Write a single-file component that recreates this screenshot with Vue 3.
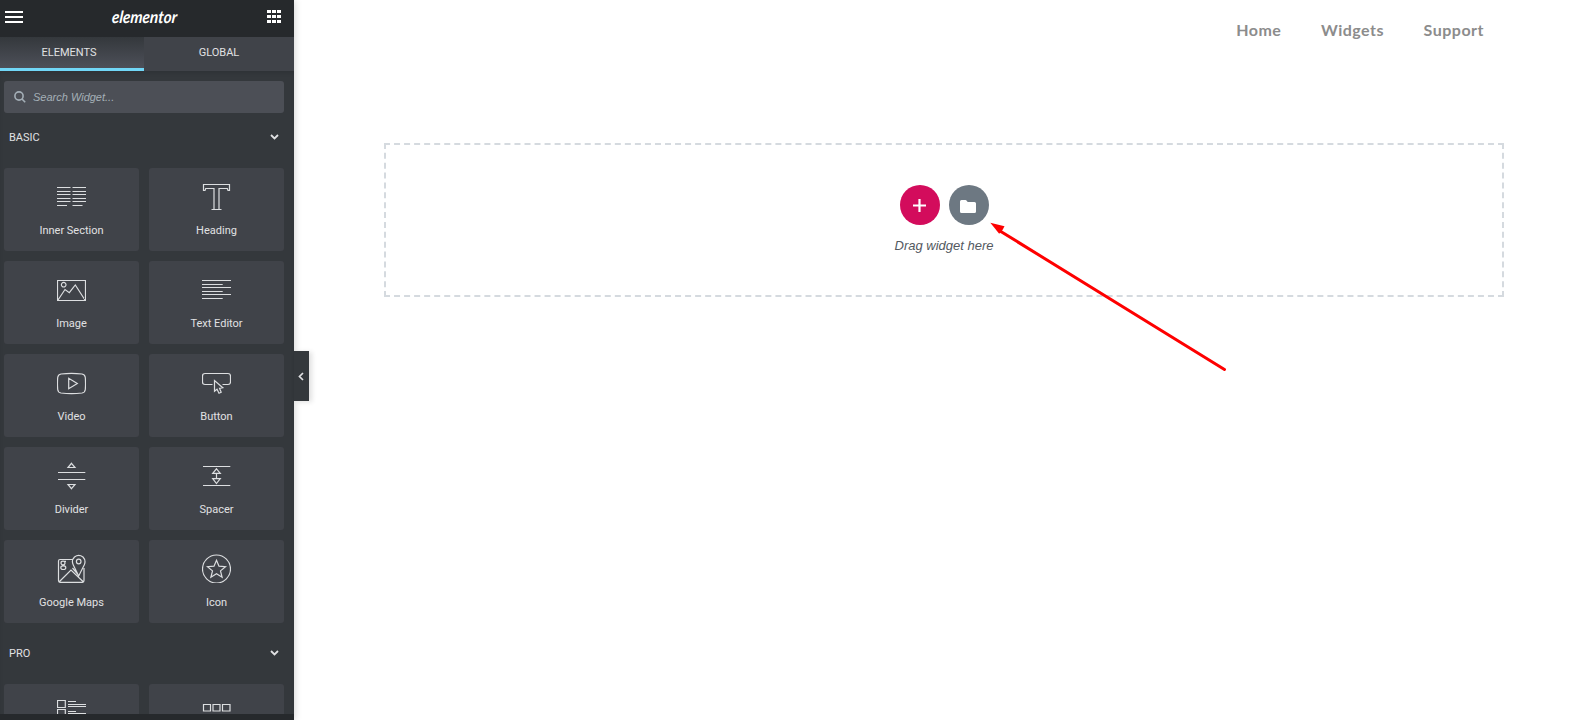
<script setup>
import { ref } from 'vue'

const tabs = ['Elements', 'Global']
const activeTab = ref('Elements')
const search = ref('')
const links = ['Home', 'Widgets', 'Support']

const categories = [
    {
        title: 'Basic',
        widgets: [
            {
                name: 'Inner Section',
                icon: 'M0 5.5H13.5M15.5 5.5H29M0 9.5H13.5M15.5 9.5H29M0 12.5H13.5M15.5 12.5H29M0 16.5H13.5M15.5 16.5H29M0 19.5H13.5M15.5 19.5H29M0 23.5H10M15.5 23.5H25.5',
            },
            {
                name: 'Heading',
                icon: 'M1.5 2.5H27.5V8.5H26L25.3 6.5H17V27.5H12V6.5H3.7L3 8.5H1.5ZM9.5 27.5H19.5',
            },
            {
                name: 'Image',
                icon: 'M.5 5.5H28.5V25.5H.5ZM9 9.7A2.3 2.3 0 1 1 4.4 9.7A2.3 2.3 0 1 1 9 9.7M1 25L8 14.5L12.3 17.7L18.3 10L28 25',
            },
            {
                name: 'Text Editor',
                icon: 'M0 5.5H29M0 9.5H20.7M0 12.5H29M0 16.5H20.7M0 19.5H29M0 23.5H20.7',
            },
            {
                name: 'Video',
                icon: 'M4 6Q14.5 4.8 25 6Q28 6.5 28.3 9.5Q28.8 15.5 28.3 21.5Q28 24.5 25 25Q14.5 26.2 4 25Q1 24.5 .7 21.5Q.2 15.5 .7 9.5Q1 6.5 4 6ZM11.7 10.3V20.8L20.3 15.5Z',
            },
            {
                name: 'Button',
                icon: 'M10.5 16.5H3Q.5 16.5 .5 14V8Q.5 5.5 3 5.5H26Q28.5 5.5 28.5 8V14Q28.5 16.5 26 16.5H20.5M12.5 12.5V23.3L15 21.3L17 25.3L19.2 24.2L17.5 20.3L20.8 19.7Z',
            },
            {
                name: 'Divider',
                icon: 'M1 11.5H28.3M1 18.5H28.3M14.5 2.3L18 6.5H11ZM14.5 27.7L18 23.5H11Z',
            },
            {
                name: 'Spacer',
                icon: 'M1 5.5H28.3M1 24.5H28.3M14.5 7.8L18.3 12.3H10.7ZM14.5 22.5L18.3 17.7H10.7ZM14.5 12V18',
            },
            {
                name: 'Google Maps',
                icon: 'M15.5 5.5H3Q1.5 5.5 1.5 7V26.5Q1.5 28.3 3 28.3H25.5Q27 28.3 27 26.5V14M2 28L14 16L26.5 28M21.7 22L16.3 11Q14 6.5 17.5 3Q21.7 -.2 26 3Q29.3 6.5 27.2 11ZM24 7.5A2.3 2.3 0 1 1 19.4 7.5A2.3 2.3 0 1 1 24 7.5M15.5 14L21 20.5M8 9A2 1.8 0 1 1 4 9A2 1.8 0 1 1 8 9M7 7.3H9M5 10.7L8 12M8.8 13.7A2.5 1.8 0 1 1 3.8 13.7A2.5 1.8 0 1 1 8.8 13.7',
            },
            {
                name: 'Icon',
                icon: 'M28.5 15A14 14 0 1 1 .5 15A14 14 0 1 1 28.5 15M14.5 6.3L17 12.2L23.5 12.7L18.5 16.9L20.1 23.3L14.5 19.8L8.9 23.3L10.5 16.9L5.5 12.7L12 12.2Z',
            },
        ],
    },
    {
        title: 'Pro',
        widgets: [
            {
                icon: 'M.5 2.5H8.3V9.5H.5ZM.5 11.5H8.3V18.5H.5ZM11 3.5H19M11 6.5H29M11 8.5H29M11 13.5H19M11 15.5H29',
            },
            {
                icon: 'M1.5 6.5H8.5V13H1.5ZM11 6.5H18V13H11ZM20.5 6.5H28V13H20.5Z',
            },
        ],
    },
]
</script>

<template>
    <div class="editor">
        <aside class="panel">
            <header class="panel-header">
                <svg class="menu-icon" viewBox="0 0 18 12">
                    <path d="M0 1H18M0 6H18M0 11H18" />
                </svg>
                <div class="logo"><span>elementor</span></div>
                <svg class="grid-icon" viewBox="0 0 14 13">
                    <path d="M0 0h4v3H0zM5 0h4v3H5zM10 0h4v3h-4zM0 5h4v3H0zM5 5h4v3H5zM10 5h4v3h-4zM0 10h4v3H0zM5 10h4v3H5zM10 10h4v3h-4z" />
                </svg>
            </header>
            <nav class="tabs">
                <div
                    v-for="tab in tabs"
                    :key="tab"
                    class="tab"
                    :class="{ active: tab === activeTab }"
                    @click="activeTab = tab"
                >
                    {{ tab }}
                </div>
            </nav>
            <div class="panel-content">
                <label class="search">
                    <svg class="search-icon" viewBox="0 0 12 12">
                        <circle cx="5" cy="5" r="4.1" />
                        <path d="M8 8L11.2 11.2" />
                    </svg>
                    <input v-model="search" type="text" placeholder="Search Widget..." />
                </label>
                <section v-for="category in categories" :key="category.title" class="category">
                    <div class="category-title">
                        <span>{{ category.title }}</span>
                        <svg class="chevron" viewBox="0 0 9 6">
                            <path d="M1 1L4.5 4.5L8 1" />
                        </svg>
                    </div>
                    <div class="widgets">
                        <div v-for="widget in category.widgets" :key="widget.icon" class="widget">
                            <svg class="widget-icon" viewBox="0 0 29 29">
                                <path :d="widget.icon" />
                            </svg>
                            <div v-if="widget.name" class="widget-name">{{ widget.name }}</div>
                        </div>
                    </div>
                </section>
            </div>
            <footer class="panel-footer"></footer>
            <div class="panel-toggle">
                <svg viewBox="0 0 6 9">
                    <path d="M5 1L1.5 4.5L5 8" />
                </svg>
            </div>
        </aside>
        <main class="preview">
            <nav class="site-nav">
                <a v-for="link in links" :key="link">{{ link }}</a>
            </nav>
            <div class="drop-area">
                <div class="buttons">
                    <div class="round add">
                        <svg viewBox="0 0 13 13"><path d="M6.5 0V13M0 6.5H13" /></svg>
                    </div>
                    <div class="round template">
                        <svg viewBox="0 0 16 13">
                            <path d="M1.5 0H5.5Q6.2 0 6.7 .7L7.7 2H14.5Q16 2 16 3.5V11.5Q16 13 14.5 13H1.5Q0 13 0 11.5V1.5Q0 0 1.5 0Z" />
                        </svg>
                    </div>
                </div>
                <p>Drag widget here</p>
            </div>
        </main>
        <svg class="arrow" viewBox="0 0 240 152">
            <path class="arrow-line" d="M10 9L234.5 147.5" />
            <path class="arrow-head" d="M.3 .7L14.5 4.2L12.5 8L9.2 11.8Z" />
        </svg>
    </div>
</template>

<style>
body {
    background: #fff;
    overflow: hidden;
}
</style>

<style scoped>
.editor {
    position: relative;
    display: flex;
    height: 720px;
    font-family: Roboto, 'Liberation Sans', sans-serif;
}
.editor * {
    box-sizing: border-box;
}
svg {
    display: block;
    fill: none;
}
.panel {
    position: relative;
    display: flex;
    flex-direction: column;
    flex: none;
    width: 294px;
    background: #34383c;
    box-shadow: 0 0 8px rgba(0, 0, 0, 0.2);
    color: #e0e1e3;
    font-size: 11px;
    font-weight: 400;
}
.panel-header {
    display: flex;
    align-items: center;
    justify-content: space-between;
    flex: none;
    height: 37px;
    padding: 0 13px 4px 5px;
    background: #26292c;
}
.menu-icon {
    width: 18px;
    height: 12px;
    margin-top: 1px;
    stroke: #fff;
    stroke-width: 2;
}
.grid-icon {
    width: 14px;
    height: 13px;
    fill: #fff;
}
.logo {
    width: 67px;
    color: #fff;
    font-family: Lato, sans-serif;
    font-size: 17px;
    font-style: italic;
    font-weight: 700;
    line-height: 20px;
}
.logo span {
    display: inline-block;
    transform: scaleX(0.9) skewX(-6deg);
    transform-origin: left;
}
.tabs {
    display: flex;
    flex: none;
    height: 34px;
    background: #404349;
}
.tab {
    flex: 1;
    padding-top: 2px;
    line-height: 28px;
    text-align: center;
    text-transform: uppercase;
}
.tab.active {
    flex: none;
    width: 144px;
    padding-right: 6px;
    border-bottom: 3px solid #71d7f7;
    background: linear-gradient(#34383c, #4d5059);
}
.panel-content {
    flex: 1;
    min-height: 0;
    padding: 10px 10px 0 4px;
    overflow: hidden;
    box-shadow: inset 0 3px 5px -2px rgba(0, 0, 0, 0.15);
}
.search {
    display: flex;
    align-items: center;
    height: 32px;
    padding: 0 11px 0 10px;
    border-radius: 3px;
    background: #4c4f56;
}
.search-icon {
    width: 12px;
    height: 12px;
    margin-right: 7px;
    stroke: #a4afb7;
    stroke-width: 1.6;
}
.search input {
    flex: 1;
    padding: 0;
    border: 0;
    outline: 0;
    background: none;
    color: #e0e1e3;
    font: italic 400 11px 'Liberation Sans', sans-serif;
}
.search input::placeholder {
    color: #a4afb7;
}
.category-title {
    display: flex;
    align-items: center;
    justify-content: space-between;
    height: 61px;
    padding: 0 5px 1px 5px;
    text-transform: uppercase;
}
.category:first-of-type .category-title {
    height: 55px;
    padding-bottom: 7px;
}
.chevron {
    width: 9px;
    height: 6px;
    stroke: #e0e1e3;
    stroke-width: 1.8;
}
.widgets {
    display: grid;
    grid-template-columns: 135px 135px;
    gap: 10px;
}
.widget {
    display: flex;
    flex-direction: column;
    align-items: center;
    height: 83px;
    padding-top: 14px;
    border-radius: 3px;
    background: #404349;
}
.widget-icon {
    width: 29px;
    height: 29px;
    stroke: #dcdee0;
    stroke-width: 1.2;
}
.widget-name {
    margin-top: 13px;
    line-height: 14px;
}
.panel-footer {
    flex: none;
    height: 6px;
    background: #26292c;
}
.panel-toggle {
    position: absolute;
    top: 351px;
    left: 294px;
    display: flex;
    align-items: center;
    justify-content: center;
    width: 15px;
    height: 50px;
    padding-right: 1px;
    background: #34383c;
    box-shadow: 3px 1px 5px rgba(0, 0, 0, 0.12);
}
.panel-toggle svg {
    width: 6px;
    height: 9px;
    stroke: #e0e1e3;
    stroke-width: 1.7;
}
.preview {
    flex: 1;
    padding: 18px 74px 0 90px;
}
.site-nav {
    display: flex;
    justify-content: flex-end;
    gap: 39.5px;
    height: 125px;
    padding-right: 20px;
    color: #8c8c8c;
    font-family: Lato, 'Open Sans', sans-serif;
    font-size: 16px;
    font-weight: 700;
    letter-spacing: 0.5px;
    line-height: 23px;
}
.drop-area {
    height: 154px;
    padding-top: 40px;
    border: 2px dashed #d5dadf;
    text-align: center;
}
.buttons {
    display: flex;
    justify-content: center;
    gap: 9px;
}
.round {
    display: flex;
    align-items: center;
    justify-content: center;
    width: 40px;
    height: 40px;
    border-radius: 50%;
}
.add {
    background: #d30c5c;
}
.add svg {
    width: 13px;
    height: 13px;
    margin-right: 1px;
    stroke: #fff;
    stroke-width: 2.2;
}
.template {
    background: #6d7882;
}
.template svg {
    width: 16px;
    height: 13px;
    margin: 2px 1px 0 0;
    fill: #fff;
}
.drop-area p {
    margin: 11px 0 0;
    color: #54595f;
    font-family: 'Liberation Sans', sans-serif;
    font-size: 13px;
    font-style: italic;
    line-height: 20px;
}
.arrow {
    position: absolute;
    top: 222px;
    left: 990px;
    width: 240px;
    height: 152px;
}
.arrow-line {
    stroke: #fe0000;
    stroke-width: 3;
    stroke-linecap: round;
}
.arrow-head {
    fill: #fe0000;
}
</style>
